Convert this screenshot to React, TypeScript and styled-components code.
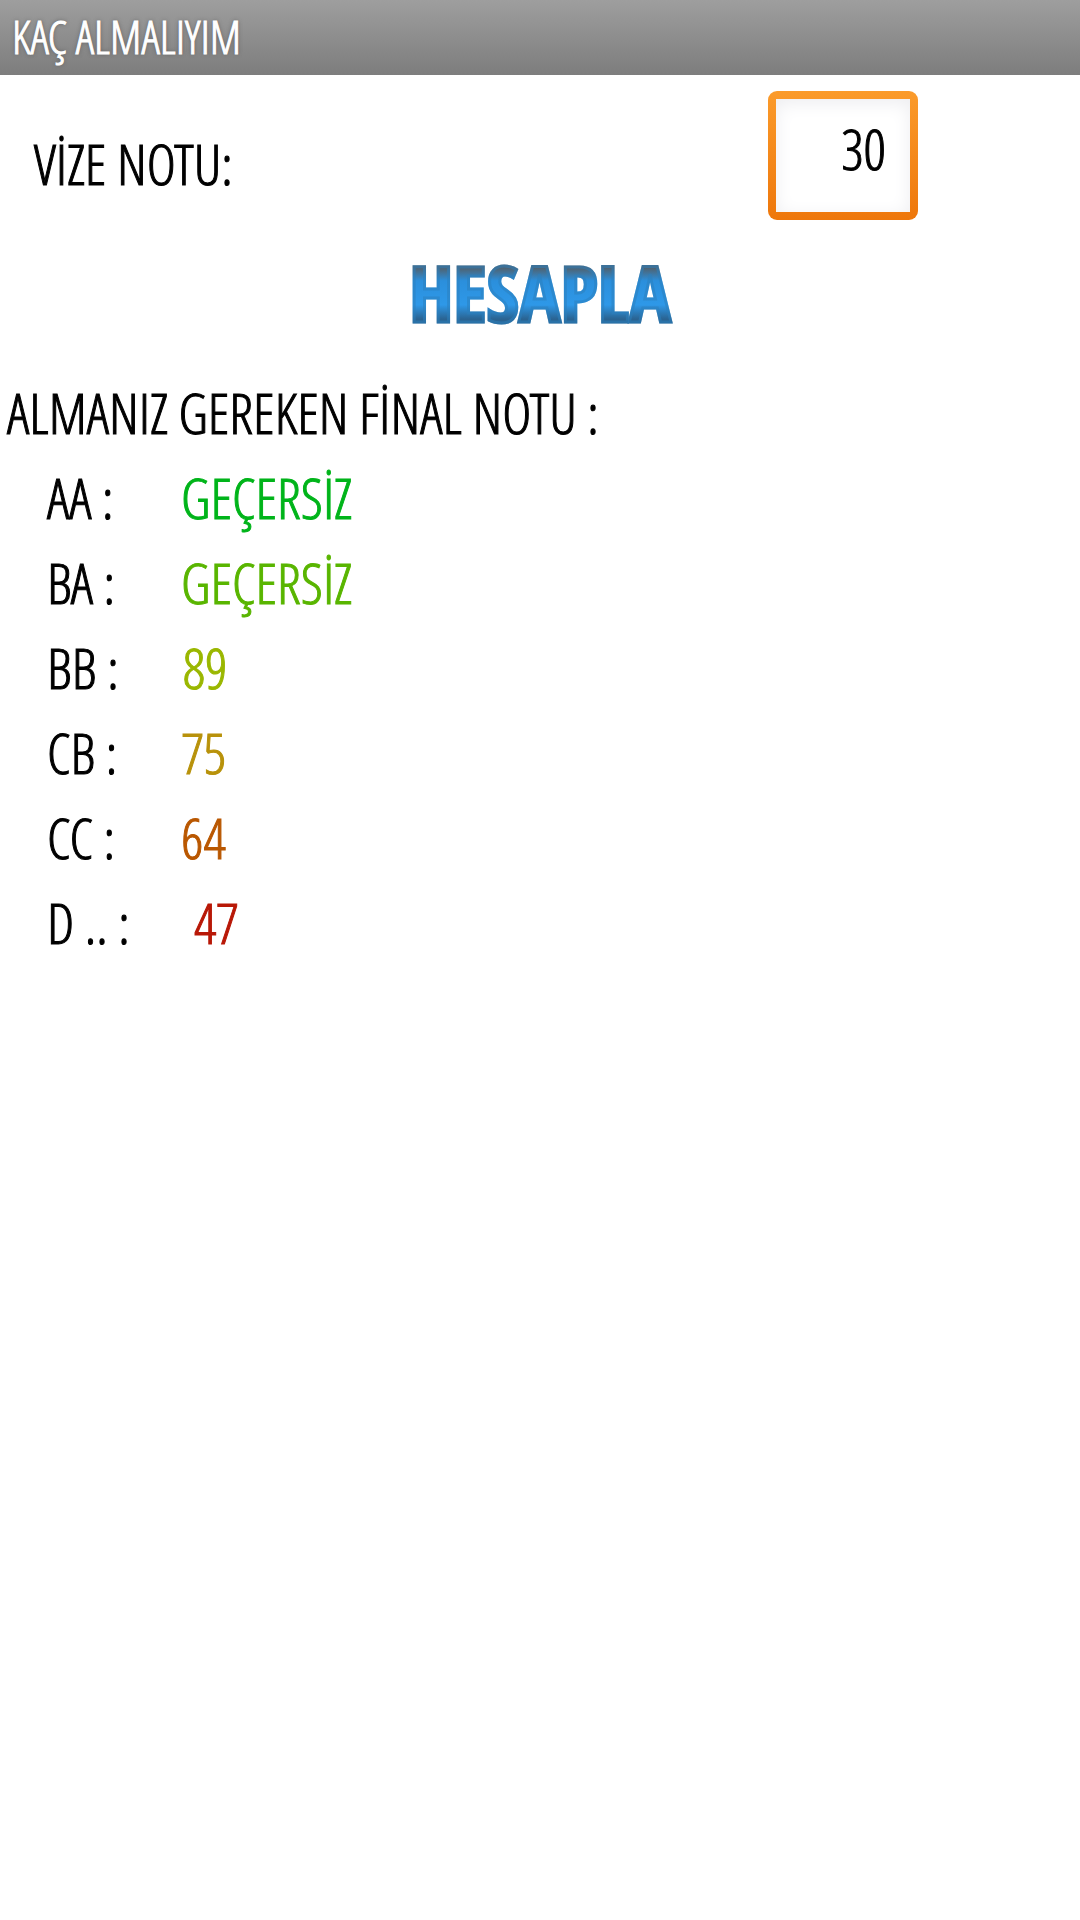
import { useState } from "react";
import styled, { createGlobalStyle } from "styled-components";

const GlobalStyle = createGlobalStyle`
  * {
    box-sizing: border-box;
  }

  body {
    margin: 0;
    background: #fff;
    color: #000;
    font-family: "Open Sans Condensed Light", "Roboto Condensed", "Liberation Sans", sans-serif;
    font-size: 56px;
    font-weight: 400;
    line-height: 60px;
    -webkit-text-stroke: 1px;
  }
`;

const TitleBar = styled.header`
  display: flex;
  align-items: center;
  height: 75px;
  padding: 0 12px 4px;
  background: linear-gradient(#9e9e9e, #7d7d7d);
`;

const Title = styled.h1`
  margin: 0;
  color: #fff;
  font-size: 46px;
  font-weight: inherit;
  line-height: 48px;
  text-shadow: 0 0 4px #555;
`;

const Form = styled.form`
  display: flex;
  flex-direction: column;
`;

const Field = styled.div`
  display: flex;
  align-items: center;
  justify-content: space-between;
  padding: 16px 15% 0 34px;
`;

const FieldLabel = styled.label`
  padding-top: 14px;
`;

const ScoreFrame = styled.div`
  width: 150px;
  padding: 8px;
  border-radius: 9px;
  background: linear-gradient(#fb9b2b, #ee770b);
`;

const ScoreInput = styled.input`
  display: block;
  width: 100%;
  height: 113px;
  padding: 0 24px 16px 0;
  border: 0;
  outline: 0;
  background: #fff;
  box-shadow: inset 0 4px 18px #ededf0;
  color: #000;
  font: inherit;
  text-align: right;
  -webkit-text-stroke: inherit;
`;

const CalculateButton = styled.button`
  align-self: center;
  margin-top: 32px;
  padding: 0 4px;
  border: 0;
  background: linear-gradient(#4f6270 20%, #2b8fdc 36%, #2e98e8 66%, #2a6391 84%);
  background-clip: text;
  color: transparent;
  cursor: pointer;
  font-family: "Open Sans Condensed", "Liberation Sans", sans-serif;
  font-size: 78px;
  font-weight: 700;
  line-height: 80px;
  -webkit-text-stroke: 3px #2b7fbe88;
`;

const Results = styled.section`
  padding: 50px 7px 0;
`;

const Heading = styled.h2`
  margin: 0;
  font-size: inherit;
  font-weight: inherit;
`;

const GradeList = styled.dl`
  display: grid;
  gap: 25px;
  margin: 25px 0 0;
  padding-left: 40px;
`;

const GradeRow = styled.div`
  display: flex;
  gap: 64px;
`;

const Grade = styled.dt`
  min-width: 70px;
`;

const Required = styled.dd<{ $color: string }>`
  margin: 0;
  color: ${({ $color }) => $color};
`;

const grades = [
  { name: "AA :", value: "GEÇERSİZ", color: "#00b41a" },
  { name: "BA :", value: "GEÇERSİZ", color: "#59b500" },
  { name: "BB :", value: "89", color: "#9ab700" },
  { name: "CB :", value: "75", color: "#b8920b" },
  { name: "CC :", value: "64", color: "#b95700" },
  { name: "D .. :", value: "47", color: "#b81807" },
];

export default function App() {
  const [score, setScore] = useState("30");

  return (
    <>
      <GlobalStyle />
      <TitleBar>
        <Title>KAÇ ALMALIYIM</Title>
      </TitleBar>
      <main>
        <Form onSubmit={(event) => event.preventDefault()}>
          <Field>
            <FieldLabel htmlFor="score">VİZE NOTU:</FieldLabel>
            <ScoreFrame>
              <ScoreInput
                id="score"
                inputMode="numeric"
                value={score}
                onChange={(event) => setScore(event.target.value)}
              />
            </ScoreFrame>
          </Field>
          <CalculateButton type="submit">HESAPLA</CalculateButton>
        </Form>
        <Results>
          <Heading>ALMANIZ GEREKEN FİNAL NOTU :</Heading>
          <GradeList>
            {grades.map((grade) => (
              <GradeRow key={grade.name}>
                <Grade>{grade.name}</Grade>
                <Required $color={grade.color}>{grade.value}</Required>
              </GradeRow>
            ))}
          </GradeList>
        </Results>
      </main>
    </>
  );
}
